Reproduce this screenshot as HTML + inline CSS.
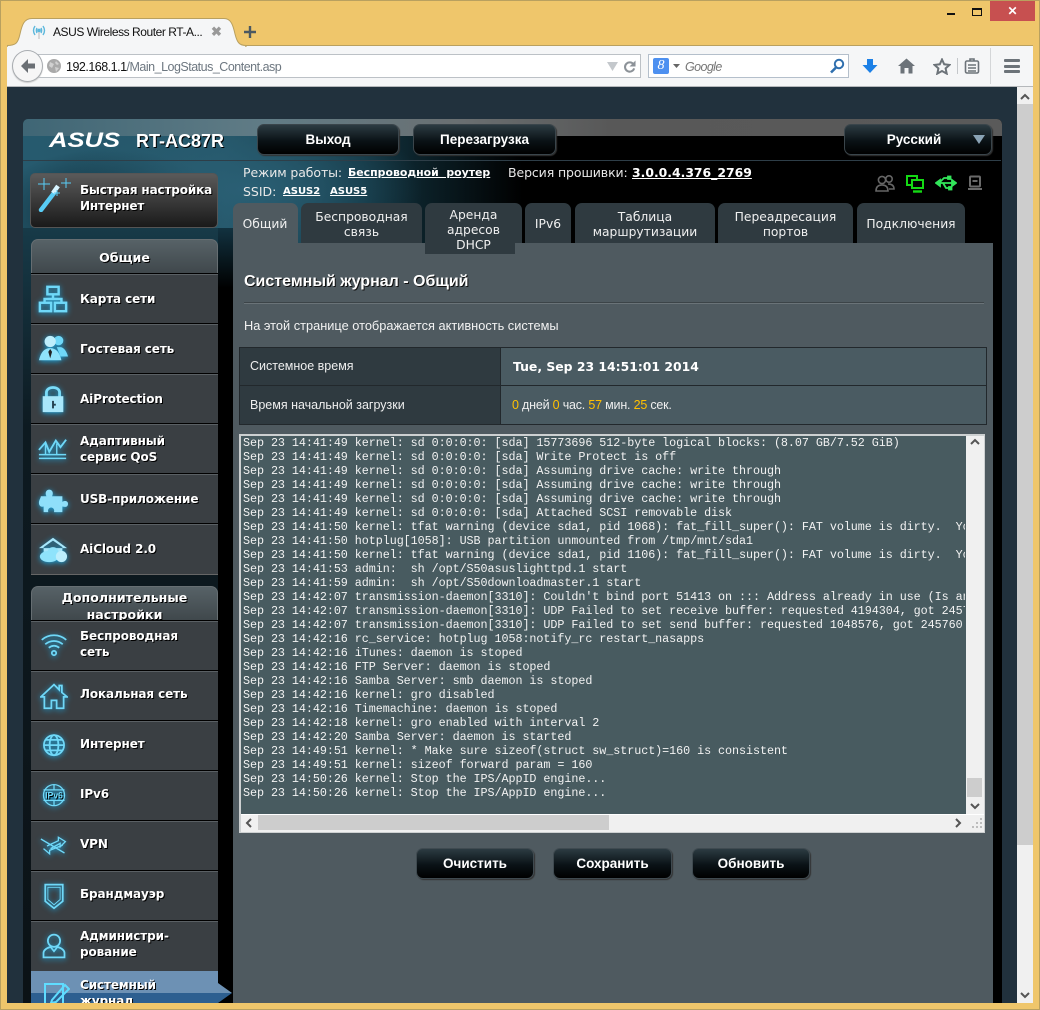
<!DOCTYPE html>
<html><head><meta charset="utf-8"><style>
html,body{margin:0;padding:0;width:1040px;height:1010px;overflow:hidden;background:#efc66b}
*{box-sizing:border-box}
div,span,svg{position:absolute}
a,b,i,u,span.n{position:static}
body{font-family:"Liberation Sans",sans-serif;color:#fff}
.t{white-space:pre;line-height:14px}
.tab{top:203px;height:40px;padding-top:3px;background:#2f3a40;border-radius:7px 7px 0 0;text-align:center;font:12.3px/15px "DejaVu Sans",sans-serif;color:#f0f0f0;display:flex;align-items:center;justify-content:center}
.side{left:31px;width:187px;height:50px;background:#3a3f43;border-top:1px solid #5a6064;box-shadow:0 -1px 0 #000;font:bold 12px/16px "DejaVu Sans",sans-serif;letter-spacing:-.1px;text-shadow:1px 1px 0 #000}
.side .l{left:49px;top:-1px;height:49px;display:flex;align-items:center;white-space:nowrap;width:138px}
.side svg{left:7px;top:9px;width:30px;height:30px;fill:#8fe3fb;stroke:none;filter:drop-shadow(0 1px 3px #1aa7e0)}
.side svg.o{fill:none;stroke:#6fd8f8;stroke-width:2}
.adv .l{top:-3px}
.adv svg{left:9px;top:10px;width:28px;height:28px}
.hd{left:31px;width:187px;background:linear-gradient(#576267,#3f474b);border-radius:7px 7px 0 0;border:1px solid #666e72;border-bottom:0;font:bold 12.6px/17px "DejaVu Sans",sans-serif;text-align:center;text-shadow:1px 1px 0 #000}
.btn{background:linear-gradient(#2c3b42,#0a1216 55%,#000);border:1px solid #3a454b;border-radius:7px;box-shadow:1px 1px 1px #333;font:bold 13.5px/29px "Liberation Sans",sans-serif;text-align:center}
#log{left:243px;top:436px;width:722px;height:377px;overflow:hidden;font:11.75px/14px "Liberation Mono",monospace;letter-spacing:-.065px;color:#f2f2f2;white-space:pre}
</style></head><body>

<!-- window frame -->
<div style="left:0;top:0;width:1040px;height:1010px;border:1px solid #b9a05f;background:#efc66b"></div>
<div style="left:947px;top:13px;width:8px;height:2px;background:#111"></div>
<div style="left:972px;top:8px;width:10px;height:8px;border:1px solid #111;border-top-width:2px"></div>
<div style="left:990px;top:1px;width:45px;height:20px;background:#c75050;color:#fff;font:bold 12px/20px 'Liberation Sans',sans-serif;text-align:center">✕</div>

<!-- toolbar -->
<div style="left:7px;top:45px;width:1026px;height:42px;background:#f5f6f7;border-top:1px solid #b9a05f;border-bottom:1px solid #b5b8bb"></div>
<svg style="left:7px;top:17px" width="240" height="30" viewBox="0 0 240 30"><path d="M0 28.5C9 28.5 11 26 13 17C15 8 17 1.500 25 1.500H217C224 1.500 226 8 228 17C230 25 232 28.5 239 28.5V30H0Z" fill="#f5f6f7" stroke="#b9a05f" stroke-width="1"/><path d="M1 29H238V31H1Z" fill="#f5f6f7"/></svg>
<svg style="left:31px;top:24px" width="16" height="16" viewBox="0 0 16 16" fill="none" stroke="#5db8dc" stroke-width="1.4"><path d="M4 2C2 5 2 8 4 11M12 2C14 5 14 8 12 11M6 4C5 6 5 7 6 9M10 4C11 6 11 7 10 9"/><circle cx="8" cy="6.5" r="1.2" fill="#5db8dc"/><path d="M8 8V15" stroke="#ccc"/></svg>
<div class="t" style="left:53px;top:25px;font-size:12px;letter-spacing:-.45px;color:#111">ASUS Wireless Router RT-A...</div>
<div style="left:211px;top:25px;font:bold 13px/14px 'Liberation Sans',sans-serif;color:#999">✖</div>
<svg style="left:243px;top:25px" width="14" height="14"><path d="M7 1V13M1 7H13" stroke="#4b5861" stroke-width="2.4"/></svg>

<div style="left:20px;top:54px;width:621px;height:24px;background:#fff;border:1px solid #bcc1c6"></div>
<div style="left:648px;top:54px;width:201px;height:24px;background:#fff;border:1px solid #b4bfcb"></div>
<div style="left:12px;top:50px;width:31px;height:32px;border-radius:50%;background:#f6f6f6;border:1px solid #a9adb1;box-shadow:0 1px 1px #ccc"></div>
<svg style="left:19px;top:57px" width="17" height="18" viewBox="0 0 17 18"><path d="M9 2L2 9L9 16V11.5H16V6.5H9Z" fill="#6a6f74"/></svg>
<svg style="left:47px;top:59px" width="14" height="14" viewBox="0 0 14 14"><circle cx="7" cy="7" r="7" fill="#a9a9a9"/><path d="M3 3L7 5L5 9L2 7ZM9 2L12 5L10 6L8 4ZM8 8L12 9L9 13Z" fill="#d0d0d0"/></svg>
<div class="t" style="left:66px;top:60px;font-size:12.5px;letter-spacing:-.5px;color:#111">192.168.1.1<span class="n" style="color:#6d7780">/Main_LogStatus_Content.asp</span></div>
<svg style="left:607px;top:62px" width="11" height="9"><path d="M0 0H11L5.500 9Z" fill="#c4c8cc"/></svg>
<svg style="left:623px;top:60px" width="13" height="13" viewBox="0 0 14 14" fill="none"><path d="M11.5 5A5 5 0 1 0 12 9" stroke="#8c9298" stroke-width="2.2"/><path d="M13.5 0.5V7H7Z" fill="#8c9298"/></svg>
<div style="left:653px;top:58px;width:16px;height:16px;background:#4d90f0;border-radius:2px;color:#fff;font:italic 14px/16px 'Liberation Serif',serif;text-align:center">8</div>
<svg style="left:673px;top:64px" width="7" height="4"><path d="M0 0H7L3.500 4Z" fill="#666"/></svg>
<div class="t" style="left:685px;top:60px;font:italic 12.5px/14px 'Liberation Sans',sans-serif;letter-spacing:-.6px;color:#777">Google</div>
<svg style="left:829px;top:58px" width="16" height="16" viewBox="0 0 16 16" fill="none" stroke="#2f6fae" stroke-width="2"><circle cx="10" cy="6" r="4.2"/><path d="M7 9.5L2 14.5" stroke-width="2.6"/></svg>
<svg style="left:862px;top:58px" width="16" height="16" viewBox="0 0 16 16"><path d="M5 1H11V7H15.5L8 15L0.5 7H5Z" fill="#1c80e6"/></svg>
<svg style="left:898px;top:58px" width="17" height="16" viewBox="0 0 17 16"><path d="M8.5 0.5L17 8H14.5V15.5H10.5V10H6.5V15.5H2.5V8H0Z" fill="#6c7379"/></svg>
<svg style="left:933px;top:58px" width="18" height="17" viewBox="0 0 18 17"><path d="M9 1.5L11.2 6.3L16.5 6.9L12.6 10.4L13.7 15.6L9 13L4.3 15.6L5.4 10.4L1.5 6.9L6.8 6.3Z" fill="none" stroke="#6c7379" stroke-width="2"/></svg>
<div style="left:957px;top:58px;width:1px;height:16px;background:#c4c7ca"></div>
<svg style="left:964px;top:58px" width="16" height="16" viewBox="0 0 16 16" fill="none" stroke="#6c7379" stroke-width="1.6"><rect x="1.5" y="3" width="13" height="12" rx="1.5"/><path d="M4 7H12M4 10H12M4 13H12M6 3V1H10V3"/></svg>
<div style="left:990px;top:48px;width:1px;height:36px;background:#d4d6d8"></div>
<div style="left:1004px;top:59px;width:16px;height:3px;background:#6c7379;border-radius:1px"></div>
<div style="left:1004px;top:65px;width:16px;height:3px;background:#6c7379;border-radius:1px"></div>
<div style="left:1004px;top:70px;width:16px;height:3px;background:#6c7379;border-radius:1px"></div>

<!-- page -->
<div style="left:7px;top:87px;width:1026px;height:916px;background:#21313d;overflow:hidden">
  <div style="left:1010px;top:0;width:16px;height:916px;background:#f0f0f0"></div>
  <div style="left:1010px;top:17px;width:16px;height:741px;background:#cdcdcd"></div>
</div>
<svg style="left:1019px;top:93px" width="12" height="8"><path d="M2 6L6 2L10 6" fill="none" stroke="#555" stroke-width="2"/></svg>
<svg style="left:1019px;top:991px" width="12" height="8"><path d="M2 2L6 6L10 2" fill="none" stroke="#555" stroke-width="2"/></svg>

<!-- router panel -->
<div style="left:23px;top:119px;width:979px;height:884px;background:#000;border-radius:5px 5px 0 0;overflow:hidden">
  <div style="left:0;top:0;width:979px;height:125px;background:radial-gradient(ellipse 180px 85px at 220px 70px,#2a5f74,rgba(42,95,116,0) 100%),radial-gradient(ellipse 120px 65px at 85px 95px,#0b2530,rgba(11,37,48,0) 100%),linear-gradient(90deg,#265a6e 0,#245567 200px,#12333f 340px,#000 500px)"></div>
  <div style="left:0;top:0;width:979px;height:17px;background:linear-gradient(90deg,#3f6675,#617c86 25%,#6a6f71 45%,#585858 60%,#5a5a5a 100%)"></div>
  <div style="left:0;top:109px;width:196px;height:775px;background:linear-gradient(#173a48,#0d1a21 200px,#0b1216)"></div>
  <div style="left:0;top:41px;width:978px;height:1px;background:#2e3e48"></div>
</div>
<div style="left:218px;top:228px;width:15px;height:775px;background:linear-gradient(#123240,#000 60px)"></div>

<!-- logo & model -->
<svg style="left:48px;top:128px" width="74" height="22" viewBox="0 0 74 22"><text x="1" y="19" font-family="Liberation Sans,sans-serif" font-weight="bold" font-style="italic" font-size="21" fill="#fff" textLength="71" lengthAdjust="spacingAndGlyphs">ASUS</text></svg>
<div class="t" style="left:136px;top:133px;font:bold 18px/17px 'Liberation Sans',sans-serif;text-shadow:1px 1px 0 #000">RT-AC87R</div>

<div class="btn" style="left:257px;top:124px;width:142px;height:31px">Выход</div>
<div class="btn" style="left:413px;top:124px;width:143px;height:31px">Перезагрузка</div>
<div class="btn" style="left:844px;top:124px;width:148px;height:31px;padding-right:8px">Русский</div>
<svg style="left:973px;top:135px" width="12" height="9"><path d="M0 0H12L6 9Z" fill="#8aa3b5"/></svg>

<!-- status text -->
<div class="t" style="left:243px;top:166px;font:12.5px/14px 'DejaVu Sans',sans-serif;color:#e8e8e8;letter-spacing:-.1px">Режим работы:</div>
<div class="t" style="left:348px;top:166px;font:bold 10.9px/14px 'DejaVu Sans',sans-serif;text-decoration:underline;color:#fff">Беспроводной&nbsp;&nbsp;роутер</div>
<div class="t" style="left:508px;top:166px;font:12.5px/14px 'DejaVu Sans',sans-serif;color:#e8e8e8;letter-spacing:-.1px">Версия прошивки:</div>
<div class="t" style="left:632px;top:166px;font:bold 12.4px/14px 'DejaVu Sans',sans-serif;text-decoration:underline;color:#fff">3.0.0.4.376_2769</div>
<div class="t" style="left:243px;top:185px;font:12.5px/14px 'DejaVu Sans',sans-serif;color:#e8e8e8">SSID:</div>
<div class="t" style="left:283px;top:185px;font:bold 10px/14px 'DejaVu Sans',sans-serif;text-decoration:underline">ASUS2</div>
<div class="t" style="left:330px;top:185px;font:bold 10px/14px 'DejaVu Sans',sans-serif;text-decoration:underline">ASUS5</div>

<!-- status icons -->
<svg style="left:875px;top:174px" width="20" height="18" viewBox="0 0 20 18" fill="none" stroke="#666" stroke-width="1.6"><circle cx="7" cy="6" r="3.6"/><circle cx="14" cy="5" r="3.2"/><path d="M1 17C1 12 4 11 7 11C10 11 13 12 13 17ZM13 10C16 10 19 11 19 15H14"/></svg>
<svg style="left:906px;top:175px" width="18" height="18" viewBox="0 0 18 18" fill="none" stroke="#14d914" stroke-width="2"><path d="M5 10H1V1H11V4"/><rect x="6" y="5" width="11" height="8"/><path d="M7 16.5H16" stroke-width="2.4"/></svg>
<svg style="left:935px;top:175px" width="22" height="16" viewBox="0 0 22 16" fill="none" stroke="#32e65a" stroke-width="1.8"><path d="M1 8H21M4 8L9 3H13M8 8L11 13H14"/><path d="M1 8L5 5V11ZM21 8L17 5V11Z" fill="#32e65a"/><rect x="13" y="1.5" width="2.5" height="2.5" fill="#32e65a"/><rect x="14" y="12" width="2.5" height="2.5" fill="#32e65a"/></svg>
<svg style="left:967px;top:175px" width="16" height="16" viewBox="0 0 16 16" fill="none" stroke="#6a6a6a" stroke-width="2"><rect x="3" y="1.5" width="10" height="10" rx="1"/><path d="M5.5 6H10.5M1 14H15"/></svg>

<!-- quick setup -->
<div style="left:30px;top:173px;width:188px;height:55px;border:1px solid #555;border-radius:5px;background:linear-gradient(#5a5a5a,#3a3a3a 50%,#1a1a1a)"></div>
<svg style="left:38px;top:176px" width="34" height="36" viewBox="0 0 34 36"><path d="M3 34L16 17" stroke="#58cdf6" stroke-width="4.5" stroke-linecap="round"/><path d="M15 17L20 10" stroke="#d8f4ff" stroke-width="4.5"/><path d="M6 2V14M0 8H12M28 2V12M23 7H33M19 14V20M16 17H22" stroke="#58cdf6" stroke-width="1"/></svg>
<div class="t" style="left:80px;top:182px;font:bold 12px/16px 'DejaVu Sans',sans-serif;letter-spacing:-.15px;text-shadow:1px 1px 0 #000">Быстрая настройка
Интернет</div>

<!-- general -->
<div class="hd" style="top:239px;height:35px;line-height:35px">Общие</div>
<div class="side" style="top:274px"><svg viewBox="0 0 32 32" class="o" style="stroke-width:2.6"><rect x="10" y="3" width="12" height="8"/><path d="M16 11V16M7 20V16H25V20"/><rect x="2" y="20" width="12" height="9"/><rect x="18" y="20" width="12" height="9"/></svg><div class="l">Карта сети</div></div>
<div class="side" style="top:324px"><svg viewBox="0 0 32 32"><circle cx="22" cy="7" r="5" fill="#6fd8f8"/><path d="M24 14C28 14 31 20 32 24H24L20 14Z" fill="#6fd8f8"/><circle cx="13" cy="8" r="6" fill="#bdeefc"/><path d="M1 28C3 19 7 15 13 15C19 15 23 19 25 28Z"/><path d="M13 16L11 19L13 26L15 19Z" fill="#222"/></svg><div class="l">Гостевая сеть</div></div>
<div class="side" style="top:374px"><svg viewBox="0 0 32 32"><path d="M9 14V9C9 2 23 2 23 9V14" fill="none" stroke="#7adcf9" stroke-width="3"/><rect x="5" y="13" width="22" height="17" fill="#a8e7fb"/><path d="M15 18H17V26H15ZM17 21H19V23H17Z" fill="#22404f"/></svg><div class="l">AiProtection</div></div>
<div class="side" style="top:424px"><svg viewBox="0 0 32 32" class="o"><path d="M1 17L8 9L12 19L19 7L24 14L30 6"/><path d="M1 22H30M1 26H30M8 9V22M20 10V22" stroke-width="1.500"/></svg><div class="l">Адаптивный<br>сервис QoS</div></div>
<div class="side" style="top:474px"><svg viewBox="0 0 32 32"><path d="M3 13H9C7 9 9 6 12 6C15 6 17 9 15 13H26V19C30 17 32 19 32 21C32 24 30 25 26 24V30H17C18 27 16 25 14 25C12 25 10 27 11 30H6V24C3 25 1 23 1 20C1 17 3 15 3 13Z" fill="#8fdffa"/></svg><div class="l">USB-приложение</div></div>
<div class="side" style="top:524px"><svg viewBox="0 0 32 32"><path d="M1 15L16 4L31 15M6 14V19H26V14L16 7Z" fill="#a8e7fb"/><ellipse cx="12" cy="24" rx="10" ry="6"/><circle cx="16" cy="20" r="6"/><circle cx="25" cy="24" r="6" fill="#bdeefc"/></svg><div class="l">AiCloud 2.0</div></div>
<div style="left:31px;top:574px;width:187px;height:1px;background:#666"></div>

<!-- advanced -->
<div class="hd" style="top:586px;height:35px;overflow:hidden;padding-top:2px">Дополнительные настройки</div>
<div class="side adv" style="top:621px"><svg viewBox="0 0 32 32" class="o"><path d="M2 9C10 2 22 2 30 9M6 14C12 9 20 9 26 14M10 18C14 15 18 15 22 18"/><circle cx="16" cy="24" r="2.500"/></svg><div class="l">Беспроводная<br>сеть</div></div>
<div class="side adv" style="top:671px"><svg viewBox="0 0 32 32" class="o"><path d="M1 17L16 3L22 9V4H25V12L31 17H27V30H19V21H13V30H5V17Z"/></svg><div class="l">Локальная сеть</div></div>
<div class="side adv" style="top:721px"><svg viewBox="0 0 32 32" class="o"><circle cx="16" cy="15" r="11.500"/><ellipse cx="16" cy="15" rx="5" ry="11.500"/><path d="M4.500 15H27.500M6 9H26M6 21H26"/></svg><div class="l">Интернет</div></div>
<div class="side adv" style="top:771px"><svg viewBox="0 0 32 32" class="o" style="stroke-width:1.500"><circle cx="16" cy="15" r="12"/><path d="M4 9H28M4 21H28M16 3V9M16 21V27"/><text x="16" y="19" font-family="Liberation Sans,sans-serif" font-size="10" font-weight="bold" text-anchor="middle" stroke="none" fill="#6fd8f8">IPv6</text></svg><div class="l">IPv6</div></div>
<div class="side adv" style="top:821px"><svg viewBox="0 0 32 32" class="o" style="stroke-width:1.500"><path d="M1 8L28 24M8 16L21 10V6L29 11L23 17V13L12 19M26 15L11 21V25L4 19"/></svg><div class="l">VPN</div></div>
<div class="side adv" style="top:871px"><svg viewBox="0 0 32 32" class="o"><path d="M6 3H26V22L16 30L6 22Z"/><path d="M9 6H23V20L16 26L9 20Z" stroke-width="1"/></svg><div class="l">Брандмауэр</div></div>
<div class="side adv" style="top:921px"><svg viewBox="0 0 32 32" class="o"><circle cx="16" cy="10" r="7"/><path d="M4 29V24C4 20 9 18 12 17L16 22L20 17C23 18 28 20 28 24V29Z"/></svg><div class="l">Администри-<br>рование</div></div>
<div style="left:31px;top:971px;width:187px;height:32px;background:linear-gradient(#6d91b4 0,#6d91b4 22px,#2d5f90 22px);font:bold 12px/16px 'DejaVu Sans',sans-serif;letter-spacing:-.1px;text-shadow:1px 1px 0 #000;overflow:hidden"><div class="t" style="left:49px;top:6px;line-height:16px">Системный
журнал</div><svg style="left:13px;top:10px" width="26" height="30" viewBox="0 0 26 30" fill="none" stroke="#5fdcff" stroke-width="2"><rect x="1" y="3" width="18" height="24"/><path d="M8 19L21 4L25 8L12 21L7 22Z"/></svg></div>
<svg style="left:218px;top:983px" width="15" height="20"><path d="M0 0L14 10H0Z" fill="#6d91b4"/><path d="M0 10H14L0 20Z" fill="#2d5f90"/></svg>

<!-- tabs -->
<div style="left:233px;top:243px;width:760px;height:760px;background:#4f5a60"></div>
<div class="tab" style="left:233px;width:65px;background:#4f5a60"><span class="n" style="margin-left:-1px">Общий</span></div>
<div class="tab" style="left:301px;width:121px">Беспроводная<br>связь</div>
<div class="tab" style="left:425px;width:90px;height:51px;padding-top:4px;border-radius:7px 0 0 0"><span class="n" style="white-space:nowrap;margin-left:7px">Аренда<br>адресов<br>DHCP</span></div>
<div style="left:515px;top:203px;width:7px;height:40px;background:#2f3a40;border-radius:0 7px 0 0"></div>
<div class="tab" style="left:525px;width:46px">IPv6</div>
<div class="tab" style="left:575px;width:140px">Таблица<br>маршрутизации</div>
<div class="tab" style="left:718px;width:135px">Переадресация<br>портов</div>
<div class="tab" style="left:857px;width:108px">Подключения</div>

<!-- heading -->
<div class="t" style="left:244px;top:273px;font:bold 16px/18px 'Liberation Sans',sans-serif;text-shadow:1px 1px 0 #111">Системный журнал - Общий</div>
<div style="left:244px;top:302px;width:740px;border-top:1px solid #3c4448;border-bottom:1px solid #6a7378;height:2px"></div>
<div class="t" style="left:244px;top:319px;font:12.8px/14px 'Liberation Sans',sans-serif;color:#f2f2f2">На этой странице отображается активность системы</div>

<!-- table -->
<div style="left:239px;top:347px;width:748px;height:78px;background:#4a5b62;border:1px solid #22282c"></div>
<div style="left:240px;top:348px;width:260px;height:76px;background:#2f3a40"></div>
<div style="left:500px;top:348px;width:1px;height:76px;background:#22282c"></div>
<div style="left:240px;top:385px;width:746px;height:1px;background:#22282c"></div>
<div class="t" style="left:250px;top:359px;font:12.5px/14px 'Liberation Sans',sans-serif;color:#eee">Системное время</div>
<div class="t" style="left:250px;top:398px;font:12.5px/14px 'Liberation Sans',sans-serif;color:#eee">Время начальной загрузки</div>
<div class="t" style="left:513px;top:359px;font:bold 12.4px/15px 'DejaVu Sans',sans-serif">Tue, Sep 23 14:51:01 2014</div>
<div class="t" style="left:512px;top:398px;font:12.5px/14px 'Liberation Sans',sans-serif;letter-spacing:-.2px;color:#eee"><span class="n" style="color:#ffc000">0</span> дней <span class="n" style="color:#ffc000">0</span> час. <span class="n" style="color:#ffc000">57</span> мин. <span class="n" style="color:#ffc000">25</span> сек.</div>

<!-- log -->
<div style="left:239px;top:434px;width:746px;height:399px;background:#485b60;border:2px solid #cdd0d1;border-width:2px 1px 1px 2px"></div>
<div style="left:966px;top:436px;width:18px;height:396px;background:#f0f0f0"></div>
<div style="left:241px;top:814px;width:743px;height:18px;background:#f0f0f0;border-top:1px solid #fff"></div>
<div style="left:258px;top:815px;width:351px;height:15px;background:#cdcdcd"></div>
<div style="left:967px;top:778px;width:15px;height:19px;background:#cdcdcd"></div>
<svg style="left:969px;top:438px" width="12" height="8"><path d="M2 6L6 2L10 6" fill="none" stroke="#555" stroke-width="2"/></svg>
<svg style="left:969px;top:802px" width="12" height="8"><path d="M2 2L6 6L10 2" fill="none" stroke="#555" stroke-width="2"/></svg>
<svg style="left:245px;top:818px" width="8" height="10"><path d="M6 1L2 5L6 9" fill="none" stroke="#555" stroke-width="2"/></svg>
<svg style="left:954px;top:818px" width="8" height="10"><path d="M2 1L6 5L2 9" fill="none" stroke="#555" stroke-width="2"/></svg>
<svg style="left:970px;top:818px" width="13" height="13" fill="#bdbdbd"><rect x="10" y="0" width="2" height="2"/><rect x="6" y="4" width="2" height="2"/><rect x="10" y="4" width="2" height="2"/><rect x="2" y="8" width="2" height="2"/><rect x="6" y="8" width="2" height="2"/><rect x="10" y="8" width="2" height="2"/></svg>
<div id="log">Sep 23 14:41:49 kernel: sd 0:0:0:0: [sda] 15773696 512-byte logical blocks: (8.07 GB/7.52 GiB)
Sep 23 14:41:49 kernel: sd 0:0:0:0: [sda] Write Protect is off
Sep 23 14:41:49 kernel: sd 0:0:0:0: [sda] Assuming drive cache: write through
Sep 23 14:41:49 kernel: sd 0:0:0:0: [sda] Assuming drive cache: write through
Sep 23 14:41:49 kernel: sd 0:0:0:0: [sda] Assuming drive cache: write through
Sep 23 14:41:49 kernel: sd 0:0:0:0: [sda] Attached SCSI removable disk
Sep 23 14:41:50 kernel: tfat warning (device sda1, pid 1068): fat_fill_super(): FAT volume is dirty.  You
Sep 23 14:41:50 hotplug[1058]: USB partition unmounted from /tmp/mnt/sda1
Sep 23 14:41:50 kernel: tfat warning (device sda1, pid 1106): fat_fill_super(): FAT volume is dirty.  You
Sep 23 14:41:53 admin:  sh /opt/S50asuslighttpd.1 start
Sep 23 14:41:59 admin:  sh /opt/S50downloadmaster.1 start
Sep 23 14:42:07 transmission-daemon[3310]: Couldn't bind port 51413 on ::: Address already in use (Is another
Sep 23 14:42:07 transmission-daemon[3310]: UDP Failed to set receive buffer: requested 4194304, got 245760
Sep 23 14:42:07 transmission-daemon[3310]: UDP Failed to set send buffer: requested 1048576, got 245760
Sep 23 14:42:16 rc_service: hotplug 1058:notify_rc restart_nasapps
Sep 23 14:42:16 iTunes: daemon is stoped
Sep 23 14:42:16 FTP Server: daemon is stoped
Sep 23 14:42:16 Samba Server: smb daemon is stoped
Sep 23 14:42:16 kernel: gro disabled
Sep 23 14:42:16 Timemachine: daemon is stoped
Sep 23 14:42:18 kernel: gro enabled with interval 2
Sep 23 14:42:20 Samba Server: daemon is started
Sep 23 14:49:51 kernel: * Make sure sizeof(struct sw_struct)=160 is consistent
Sep 23 14:49:51 kernel: sizeof forward param = 160
Sep 23 14:50:26 kernel: Stop the IPS/AppID engine...
Sep 23 14:50:26 kernel: Stop the IPS/AppID engine...</div>

<!-- buttons -->
<div class="btn" style="left:416px;top:848px;width:118px;height:31px;border-color:#3f4a50">Очистить</div>
<div class="btn" style="left:553px;top:848px;width:119px;height:31px;border-color:#3f4a50">Сохранить</div>
<div class="btn" style="left:692px;top:848px;width:118px;height:31px;border-color:#3f4a50">Обновить</div>

</body></html>
